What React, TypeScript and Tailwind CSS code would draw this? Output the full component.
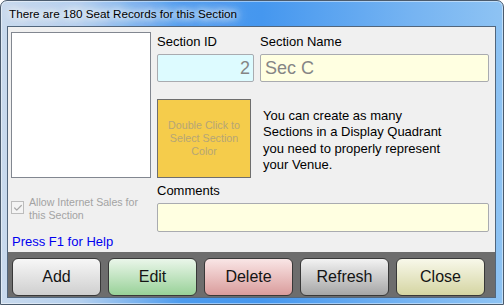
import { Check } from 'lucide-react';

type Btn = { label: string; grad: string };

const buttons: Btn[] = [
  { label: 'Add', grad: 'bg-linear-to-b from-[#f7f7f7] to-[#cfcfcf]' },
  { label: 'Edit', grad: 'bg-linear-to-b from-[#eaf6ea] to-[#98d198]' },
  { label: 'Delete', grad: 'bg-linear-to-b from-[#f9e6e6] to-[#d99c9c]' },
  { label: 'Refresh', grad: 'bg-linear-to-b from-[#f3f3f3] to-[#a6a6a6]' },
  { label: 'Close', grad: 'bg-linear-to-b from-[#f8f8ea] to-[#d5d5a2]' },
];

export default function App() {
  return (
    <div className="w-[504px] h-[305px] overflow-hidden font-['Liberation_Sans',Arial,sans-serif]">
      <div className="w-full h-full flex flex-col rounded-t-[7px] border border-[#4b5b6d] bg-[linear-gradient(to_right,#c9daed_0%,#b3cfee_16%,#4c9bee_36%,#4597ef_52%,#76b4f2_82%,#8ec3f3_100%)] shadow-[inset_0_0_0_1px_rgba(255,255,255,0.45)]">
        {/* title bar */}
        <div className="h-[25px] flex items-center pl-[8px]">
          <span className="text-[11.7px] text-black [text-shadow:0_0_6px_#fff,0_0_10px_#fff,0_0_14px_#fff,0_0_18px_#fff]">
            There are 180 Seat Records for this Section
          </span>
        </div>

        {/* client area */}
        <div className="ml-[6px] mr-[7px] h-[272px] flex flex-col border border-[#52667c]">
          <div className="h-[225px] bg-[#f0f0f0] pt-[5px] pl-[3px] grid grid-cols-[140px_1fr] gap-x-[6px]">
            {/* left column */}
            <div className="flex flex-col">
              <div className="h-[146px] bg-white border border-[#828790]" />
              <div className="mt-[18px] flex items-start gap-[5px]">
                <div className="mt-[5px] w-[13px] h-[13px] shrink-0 border border-[#bcbcbc] bg-[#f4f4f4] flex items-center justify-center">
                  <Check className="w-[10px] h-[10px] text-[#a9a9a9]" strokeWidth={3} />
                </div>
                <div className="text-[10.6px] leading-[12.5px] text-[#a3a3a3]">
                  Allow Internet Sales for
                  <br />
                  this Section
                </div>
              </div>
              <div className="mt-[13px] pl-[1px] text-[13px] leading-[15px] text-[#0000f0]">Press F1 for Help</div>
            </div>

            {/* right column */}
            <div className="flex flex-col">
              <div className="flex gap-[6px]">
                <div className="w-[97px] flex flex-col">
                  <div className="h-[19px] leading-[19px] text-[13px] text-black">Section ID</div>
                  <div className="mt-[3px] h-[28px] bg-[#ddfbff] border border-[#a9abb0] rounded-[2px] flex items-center justify-end pr-[3px] text-[18px] text-[#858585]">
                    2
                  </div>
                </div>
                <div className="w-[229px] flex flex-col">
                  <div className="h-[19px] leading-[19px] text-[13px] text-black">Section Name</div>
                  <div className="mt-[3px] h-[28px] bg-[#ffffe1] border border-[#a9abb0] rounded-[2px] flex items-center pl-[4px] text-[18px] text-[#858585]">
                    Sec C
                  </div>
                </div>
              </div>

              <div className="mt-[17px] flex items-start">
                <div className="w-[94px] h-[79px] shrink-0 bg-[#f5cc4b] border border-[#6e6e6e] flex items-center justify-center text-center text-[10.7px] leading-[13px] text-[#b6a676]">
                  Double Click to
                  <br />
                  Select Section
                  <br />
                  Color
                </div>
                <div className="ml-[12px] mt-[9px] text-[13px] leading-[16.3px] text-black whitespace-nowrap">
                  You can create as many
                  <br />
                  Sections in a Display Quadrant
                  <br />
                  you need to properly represent
                  <br />
                  your Venue.
                </div>
              </div>

              <div className="mt-[4px] h-[17px] leading-[17px] text-[13px] text-black">Comments</div>
              <div className="mt-[4px] w-[332px] h-[29px] bg-[#ffffe1] border border-[#a9abb0] rounded-[2px]" />
            </div>
          </div>

          {/* button bar */}
          <div className="flex-1 bg-[#6d6d6d] pt-[6px] pl-[4px] flex gap-[7px]">
            {buttons.map(b => (
              <button
                key={b.label}
                className={`w-[89px] h-[38px] rounded-[6px] border border-[#383838] ${b.grad} text-[16px] text-[#141414] flex items-center justify-center`}
              >
                {b.label}
              </button>
            ))}
          </div>
        </div>
      </div>
    </div>
  );
}
